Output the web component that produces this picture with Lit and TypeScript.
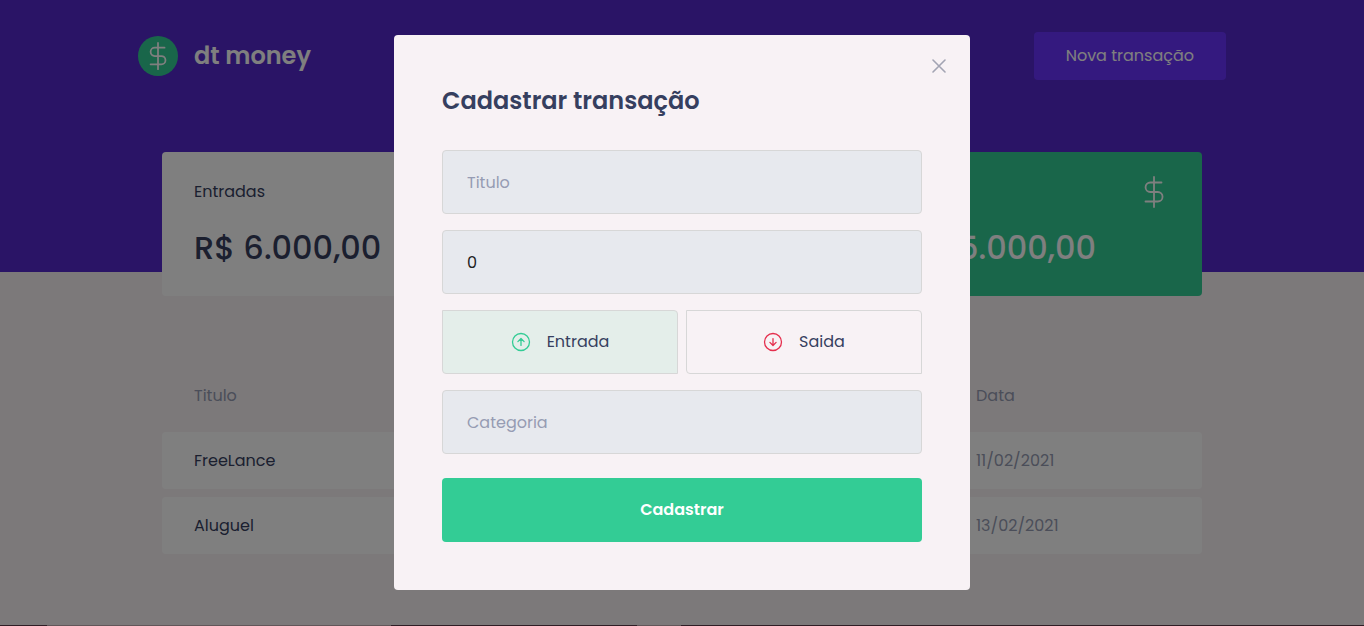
import { LitElement, html, css, svg } from "lit";
import { customElement, state } from "lit/decorators.js";

const dollar = svg`<path d="M16 1v30M23.5 6.5H12.3a4.75 4.75 0 0 0 0 9.5h7.5a4.75 4.75 0 0 1 0 9.5H7.5" />`;

const transactions = [
  { title: "FreeLance", amount: "R$ 6.000,00", category: "Dev", date: "11/02/2021" },
  { title: "Aluguel", amount: "- R$ 1.000,00", category: "Casa", date: "13/02/2021" },
];

@customElement("app-root")
class AppRoot extends LitElement {
  @state() private type: "in" | "out" = "in";

  static styles = css`
    :host {
      display: block;
      min-height: 100vh;
      background: #f8f2f5;
      color: #969cb3;
      font: 400 16px/24px Poppins, Inter, sans-serif;
      --green: #33cc95;
      --title: #363f5f;
    }
    * { box-sizing: border-box; }
    button, input { font: inherit; }
    button { cursor: pointer; line-height: 26px; }
    svg { fill: none; stroke: currentColor; stroke-linecap: round; stroke-linejoin: round; display: block; }
    h1, h2, p { margin: 0; }

    .header { background: #5429cc; }
    .header-content {
      max-width: 1120px;
      margin: 0 auto;
      padding: 32px 16px 192px;
      display: flex;
      align-items: center;
      justify-content: space-between;
      color: #fff;
    }
    .brand { display: flex; align-items: center; gap: 16px; font-size: 24px; line-height: 26px; font-weight: 600; }
    .brand-mark { width: 40px; height: 40px; border-radius: 50%; background: var(--green); display: grid; place-items: center; }
    .new { height: 48px; padding: 0 32px; border: 0; border-radius: 4px; background: #6933ff; color: #fff; }

    .main { max-width: 1120px; margin: -160px auto 0; padding: 40px; }
    .summary { display: grid; grid-template-columns: repeat(3, 1fr); gap: 32px; }
    .card { height: 144px; padding: 24px 32px; border-radius: 4px; background: #fff; color: var(--title); }
    .card.total { background: var(--green); color: #fff; }
    .card-head { display: flex; align-items: center; justify-content: space-between; height: 32px; line-height: 26px; }
    .in { color: var(--green); }
    .out { color: #e52e4d; }
    .card-value { margin-top: 16px; font-size: 32px; line-height: 48px; font-weight: 500; }

    .table { width: 100%; margin-top: 64px; border-spacing: 0 8px; table-layout: fixed; }
    .table th { padding: 16px 32px; text-align: left; font-weight: 400; }
    .table td { padding: 16px 32px; background: #fff; line-height: 25px; }
    .table .date { width: 258px; }
    .table td:first-child { color: var(--title); border-radius: 4px 0 0 4px; }
    .table td:last-child { border-radius: 0 4px 4px 0; }

    .overlay {
      position: fixed;
      inset: 0;
      padding-bottom: 1px;
      display: flex;
      align-items: center;
      justify-content: center;
      background: rgba(0, 0, 0, 0.5);
    }
    .edge {
      position: absolute;
      inset: auto 0 0;
      height: 1px;
      background: linear-gradient(90deg, #2f1d25 47px, #625659 47px 391px, #2f1d25 391px 637px, #625659 637px 681px, #2f1d25 681px);
    }
    .modal { position: relative; width: 100%; max-width: 576px; padding: 48px; border-radius: 4px; background: #f8f2f5; }
    .close { position: absolute; top: 24px; right: 24px; padding: 0; border: 0; background: none; color: #a3a4b3; }
    .modal-title { color: var(--title); font-size: 24px; line-height: 35px; font-weight: 600; margin-bottom: 32px; }
    .form { display: flex; flex-direction: column; gap: 16px; }
    .field {
      width: 100%;
      height: 64px;
      padding: 0 24px;
      border: 1px solid #d7d7d7;
      border-radius: 4px;
      background: #e7e9ee;
      color: #222;
      outline: none;
    }
    .field::placeholder { color: #969cb3; opacity: 1; }
    .types { display: grid; grid-template-columns: 1fr 1fr; gap: 8px; }
    .type {
      height: 64px;
      display: flex;
      align-items: center;
      justify-content: center;
      gap: 16px;
      border: 1px solid #d7d7d7;
      border-radius: 0 4px;
      background: transparent;
      color: var(--title);
    }
    .type.in-active { background: #e4eeea; }
    .type.out-active { background: #f6e2e7; }
    .submit { height: 64px; margin-top: 8px; border: 0; border-radius: 4px; background: var(--green); color: #fff; font-weight: 600; }
  `;

  private arrow(dir: "in" | "out", size: number) {
    return html`<svg class=${dir} width=${size} height=${size} viewBox="0 0 20 20" stroke-width="1.3" aria-hidden="true">
      <circle cx="10" cy="10" r="8.5" />
      ${dir === "in"
        ? svg`<path d="M10 13.4V6.8M6.9 9.6 10 6.5l3.1 3.1" />`
        : svg`<path d="M10 6.6v6.6M6.9 10.4 10 13.5l3.1-3.1" />`}
    </svg>`;
  }

  render() {
    return html`
      <header class="header">
        <div class="header-content">
          <h1 class="brand">
            <span class="brand-mark"><svg width="28" height="28" viewBox="0 0 32 32" stroke-width="2" aria-hidden="true">${dollar}</svg></span>
            dt money
          </h1>
          <button class="new" type="button">Nova transação</button>
        </div>
      </header>
      <main class="main">
        <section class="summary">
          <div class="card">
            <div class="card-head"><span>Entradas</span>${this.arrow("in", 32)}</div>
            <p class="card-value">R$ 6.000,00</p>
          </div>
          <div class="card">
            <div class="card-head"><span>Saídas</span>${this.arrow("out", 32)}</div>
            <p class="card-value">- R$ 1.000,00</p>
          </div>
          <div class="card total">
            <div class="card-head"><span>Total</span><svg width="32" height="32" viewBox="0 0 32 32" stroke-width="1.8" aria-hidden="true">${dollar}</svg></div>
            <p class="card-value">R$ 5.000,00</p>
          </div>
        </section>
        <table class="table">
          <thead>
            <tr><th>Titulo</th><th>Valor</th><th>Categoria</th><th class="date">Data</th></tr>
          </thead>
          <tbody>
            ${transactions.map((t) => html`<tr><td>${t.title}</td><td>${t.amount}</td><td>${t.category}</td><td>${t.date}</td></tr>`)}
          </tbody>
        </table>
      </main>
      <div class="overlay">
        <div class="edge"></div>
        <div class="modal" role="dialog" aria-modal="true" aria-labelledby="modal-title">
          <button class="close" type="button" aria-label="Fechar">
            <svg width="14" height="14" viewBox="0 0 14 14" stroke-width="1.6" aria-hidden="true"><path d="M1 1l12 12M13 1 1 13" /></svg>
          </button>
          <h2 class="modal-title" id="modal-title">Cadastrar transação</h2>
          <form class="form" @submit=${(e: Event) => e.preventDefault()}>
            <input class="field" aria-label="Titulo" placeholder="Titulo" />
            <input class="field" aria-label="Valor" inputmode="decimal" value="0" />
            <div class="types">
              <button type="button" class="type ${this.type === "in" ? "in-active" : ""}" @click=${() => (this.type = "in")}>
                ${this.arrow("in", 20)}<span>Entrada</span>
              </button>
              <button type="button" class="type ${this.type === "out" ? "out-active" : ""}" @click=${() => (this.type = "out")}>
                ${this.arrow("out", 20)}<span>Saida</span>
              </button>
            </div>
            <input class="field" aria-label="Categoria" placeholder="Categoria" />
            <button class="submit" type="submit">Cadastrar</button>
          </form>
        </div>
      </div>
    `;
  }
}
